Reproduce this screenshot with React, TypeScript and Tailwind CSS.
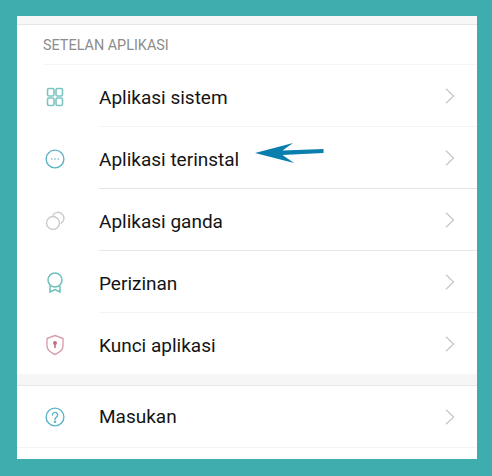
import type { ReactNode } from 'react';

const font = { fontFamily: 'Roboto, sans-serif' };

function GridIcon() {
    return (
        <svg width="20" height="20" viewBox="0 0 20 20" fill="none" stroke="#7cc4c2" strokeWidth="1.6">
            <rect x="2.5" y="1.5" width="6.5" height="7.5" rx="1.5" />
            <rect x="11" y="1.5" width="6.5" height="7.5" rx="1.5" />
            <rect x="2.5" y="11" width="6.5" height="7.5" rx="1.5" />
            <rect x="11" y="11" width="6.5" height="7.5" rx="1.5" />
        </svg>
    );
}

function DotsIcon() {
    return (
        <svg width="20" height="20" viewBox="0 0 20 20" fill="none">
            <circle cx="10" cy="10" r="8.9" stroke="#5db3c4" strokeWidth="1.4" />
            <circle cx="6.8" cy="10" r="0.8" fill="#5db3c4" />
            <circle cx="10" cy="10" r="0.8" fill="#5db3c4" />
            <circle cx="13.2" cy="10" r="0.8" fill="#5db3c4" />
        </svg>
    );
}

function DualIcon() {
    return (
        <svg width="20" height="20" viewBox="0 0 20 20" fill="none" stroke="#cbcbcb" strokeWidth="1.4">
            <circle cx="8" cy="12" r="6.5" />
            <path d="M7.5 4.6 A6 6 0 1 1 15.6 12.6" />
        </svg>
    );
}

function RibbonIcon() {
    return (
        <svg width="20" height="22" viewBox="0 0 20 22" fill="none" stroke="#6cc0bb" strokeWidth="1.5">
            <circle cx="10" cy="8" r="7" />
            <path d="M5 14 L5 20 L10 17.5 L15 20 L15 14" />
        </svg>
    );
}

function ShieldIcon() {
    return (
        <svg width="20" height="22" viewBox="0 0 20 22" fill="none">
            <path d="M10 1.5 L18 4.5 L18 12 Q18 17 10 20.5 Q2 17 2 12 L2 4.5 Z" stroke="#d9a0ac" strokeWidth="1.4" strokeLinejoin="round" />
            <circle cx="10" cy="9" r="2" fill="#c9707f" />
            <rect x="9.2" y="9" width="1.6" height="5" fill="#c9707f" />
        </svg>
    );
}

function HelpIcon() {
    return (
        <svg width="20" height="20" viewBox="0 0 20 20" fill="none" stroke="#5db3c9" strokeWidth="1.4">
            <circle cx="10" cy="10" r="8.9" />
            <path d="M7.4 8 A2.6 2.6 0 1 1 11.4 10.2 Q10 11 10 12.4" strokeLinecap="round" />
            <circle cx="10" cy="14.7" r="0.6" fill="#5db3c9" />
        </svg>
    );
}

function Chevron() {
    return (
        <svg width="10" height="16" viewBox="0 0 10 16" fill="none" stroke="#c6c6c6" strokeWidth="1.2">
            <path d="M1 0.8 L8.6 8 L1 15.2" />
        </svg>
    );
}

function Row({ icon, label, line }: { icon: ReactNode; label: string; line: string }) {
    return (
        <div className="flex h-[62px] items-center">
            <div className="mt-[2px] flex w-[82px] shrink-0 items-center justify-start pl-[28px]">{icon}</div>
            <div className={`flex h-full flex-1 items-center border-b pr-[22px] ${line}`}>
                <span className="flex-1 pt-[6px] text-[19px] text-[#141414]">{label}</span>
                <Chevron />
            </div>
        </div>
    );
}

export default function App() {
    return (
        <div className="h-[476px] w-[492px] bg-[#3fadad] px-[17px] pt-[16px] pb-[17px]" style={font}>
            <div className="relative h-full w-[460px] overflow-hidden bg-white">
                <div className="h-[9px] border-b border-[#e6e6e6] bg-[#f7f7f7]" />
                <div className="ml-[26px] flex h-[40px] items-center border-b border-[#f5f5f5] pt-[2px] text-[14.4px] text-[#8c8c8c]">
                    SETELAN APLIKASI
                </div>
                <Row icon={<GridIcon />} label="Aplikasi sistem" line="border-[#f3f3f3]" />
                <Row icon={<DotsIcon />} label="Aplikasi terinstal" line="border-[#e6e6e6]" />
                <Row icon={<DualIcon />} label="Aplikasi ganda" line="border-[#e8e8e8]" />
                <Row icon={<RibbonIcon />} label="Perizinan" line="border-[#f3f3f3]" />
                <div className="flex h-[61px] items-center">
                    <div className="mt-[2px] flex w-[82px] shrink-0 items-center pl-[28px]"><ShieldIcon /></div>
                    <span className="flex-1 pt-[6px] text-[19px] text-[#141414]">Kunci aplikasi</span>
                    <div className="flex pr-[22px]"><Chevron /></div>
                </div>
                <div className="h-[12px] border-b border-[#e8e8e8] bg-[#f6f6f6]" />
                <div className="border-b border-[#f3f3f3]">
                    <div className="flex h-[61px] items-center">
                        <div className="flex w-[82px] shrink-0 items-center pl-[28px]"><HelpIcon /></div>
                        <span className="flex-1 pt-[2px] text-[19px] text-[#141414]">Masukan</span>
                        <div className="flex pr-[22px]"><Chevron /></div>
                    </div>
                </div>
                <svg className="absolute left-[237px] top-[126px]" width="72" height="24" viewBox="0 0 72 24">
                    <path d="M1 11 L39 1 L28.5 8.5 L69.5 7 L69.5 11 L28.5 13 L40 21 Z" fill="#0a7fae" />
                </svg>
            </div>
        </div>
    );
}
